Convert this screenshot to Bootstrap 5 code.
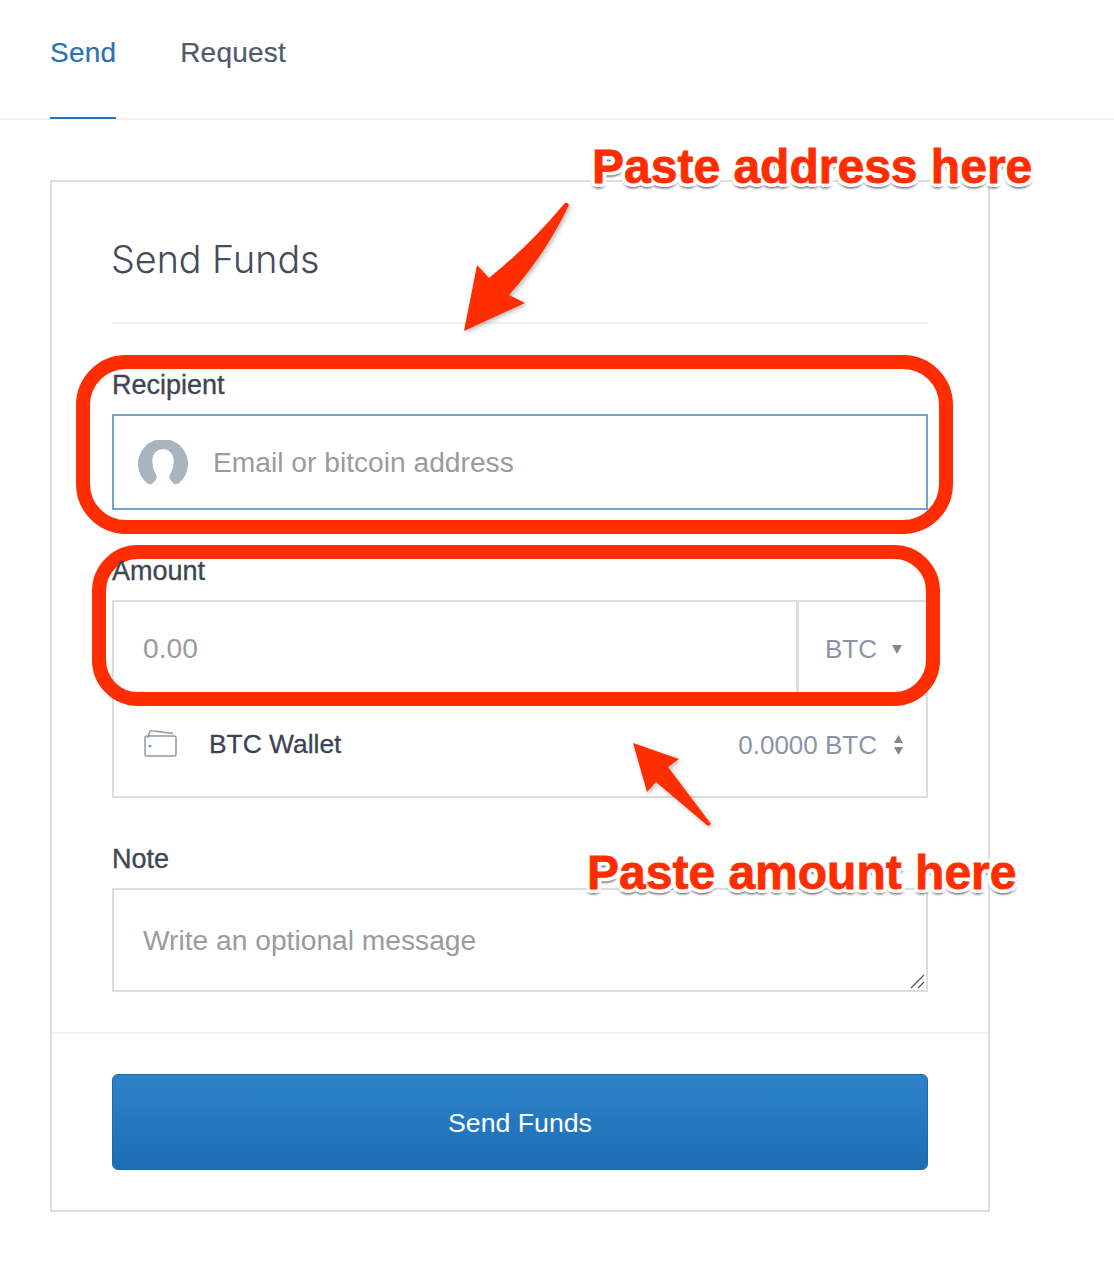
<!DOCTYPE html>
<html lang="en">
<head>
    <meta charset="UTF-8">
    <meta name="viewport" content="width=device-width, initial-scale=1.0">
    <title>Send Funds</title>
    <link href="https://cdn.jsdelivr.net/npm/bootstrap@5.3.0/dist/css/bootstrap.min.css" rel="stylesheet">
    <style>
        body { position: relative; height: 1268px; overflow: hidden; background: #fff; font-family: "Liberation Sans", Arial, sans-serif; color: #3d4653; }

        /* tabs */
        .send-tabs { height: 120px; padding-left: 50px; gap: 64px; border-bottom: 2px solid #eef0f1; }
        .send-tabs .nav-link { height: 119px; padding: 34px 0 0; font-size: 28px; line-height: 38px; letter-spacing: .2px; color: #4f5b6c; border-bottom: 2px solid transparent; -webkit-text-stroke: .2px currentColor; }
        .send-tabs .nav-link.active { color: #2b72b4; border-bottom-color: #2b72b4; }

        /* card */
        .send-page { padding: 60px 0 0 50px; }
        .send-card { width: 940px; height: 1032px; border: 2px solid #dedfe0; border-radius: 0; }
        .send-head { margin: 0 60px; height: 142px; padding-top: 56px; border-bottom: 2px solid #eef0f1; }
        .send-head h1 { margin: 0 0 0 -1px; font-family: Inter, "Liberation Sans", sans-serif; font-weight: 300; font-size: 37.7px; line-height: 42px; color: #434c59; }
        .send-body { padding: 43px 60px 40px; }
        .field-label { display: block; margin: 0 0 11px; font-size: 27px; line-height: 36px; color: #3d4653; -webkit-text-stroke: .35px #3d4653; }
        .amount-label { position: relative; z-index: 5; }
        .field-gap { margin-bottom: 43px; }

        /* inputs */
        .form-control.send-input { height: 96px; padding: 0 29px; border: 2px solid #dcdddf; border-radius: 0; font-size: 28.2px; color: #3d4653; box-shadow: none; }
        .send-input::placeholder { color: #9b9b9b; opacity: 1; }
        .recipient-box { height: 96px; padding-left: 24px; gap: 25px; border: 2px solid #6fa4d2; }
        .recipient-box svg { margin-top: 6px; }
        .form-control.send-input.recipient-input { height: 92px; padding: 0; border: 0; }
        .amount-unit { width: 131px; padding: 2px 0 0 26px; background: #fff; border: 2px solid #dcdddf; border-radius: 0; font-size: 26px; color: #8c93a9; gap: 15px; }
        .amount-unit.input-group-text { margin-left: -2px; }
        .wallet-row { height: 104px; margin-top: -2px; padding: 0 23px 0 30px; border: 2px solid #dcdddf; border-top: 0; font-size: 26px; color: #8c93a9; }
        .wallet-icon { margin-bottom: 4px; }
        .wallet-name { margin-left: 32px; font-size: 26.4px; color: #3a4454; -webkit-text-stroke: .3px #3a4454; }
        .wallet-sort { margin-left: 17px; }
        .note-wrap { position: relative; }
        textarea.form-control.send-input { display: block; height: 104px; padding-top: 33px; resize: none; line-height: 34px; }
        .note-grip { position: absolute; right: 2px; bottom: 2px; }

        /* footer */
        .send-foot { padding: 40px 60px; background: #fff; border-top: 2px solid #eef0f1; border-radius: 0; }
        .btn.send-btn { display: block; width: 100%; height: 96px; padding-top: 8px; font-size: 26.7px; color: #fff; background: linear-gradient(#2e83c8, #1c6db3); border: 1px solid #1f6aa8; border-radius: 6px; }

        /* annotations over the screenshot */
        .mark-box { position: absolute; border: 14px solid #ff2d00; pointer-events: none; }
        .mark-recipient { left: 76px; top: 355px; width: 877px; height: 179px; border-radius: 50px; }
        .mark-amount { left: 92px; top: 545px; width: 848px; height: 161px; border-radius: 46px; }
        .mark-text { position: absolute; margin: 0; font-weight: 700; font-size: 48px; line-height: 56px; white-space: nowrap; color: #ff2d00; -webkit-text-stroke: .8px #ff2d00; text-shadow: 4px 0 0 #fff, -4px 0 0 #fff, 0 4px 0 #fff, 0 -4px 0 #fff, 3px 3px 0 #fff, -3px 3px 0 #fff, 3px -3px 0 #fff, -3px -3px 0 #fff, 3.5px 1.5px 0 #fff, -3.5px 1.5px 0 #fff, 3.5px -1.5px 0 #fff, -3.5px -1.5px 0 #fff, 0 6px 2px rgba(0, 0, 0, .3), 3px 5px 2px rgba(0, 0, 0, .2), -3px 5px 2px rgba(0, 0, 0, .2); }
        .mark-address { left: 592px; top: 139px; }
        .mark-paste { left: 587px; top: 845px; }
        .mark-arrow { position: absolute; left: 0; top: 0; pointer-events: none; filter: drop-shadow(2px 2px 2px rgba(0, 0, 0, .25)); }
    </style>
</head>
<body>
    <!-- Tabs -->
    <nav class="nav send-tabs">
        <a class="nav-link active" href="#">Send</a>
        <a class="nav-link" href="#">Request</a>
    </nav>

    <!-- Send form -->
    <div class="send-page">
        <div class="card send-card">
            <div class="send-head"><h1>Send Funds</h1></div>
            <form class="send-body">
                <div class="field-gap">
                    <label class="field-label" for="recipient">Recipient</label>
                    <div class="d-flex align-items-center recipient-box">
                        <svg width="50" height="50" viewBox="0 0 50 50" class="flex-shrink-0">
                            <path fill="#a9b4bf" d="M9.5 43.5A25 25 0 1 1 40.5 43.5L37 44.5C34.5 42.5 32.5 40.5 31.5 38.5C31 36.5 31.5 35 32.5 33.5C35 29 36 24 35.5 19C35 13 30 9 25 9C20 9 15 13 14.5 19C14 24 15 29 17.5 33.5C18.5 35 19 36.5 18.5 38.5C17.5 40.5 15.5 42.5 13 44.5Z"/>
                        </svg>
                        <input id="recipient" class="form-control send-input recipient-input" placeholder="Email or bitcoin address">
                    </div>
                </div>
                <div class="field-gap">
                    <label class="field-label amount-label" for="amount">Amount</label>
                    <div class="input-group">
                        <input id="amount" class="form-control send-input" placeholder="0.00">
                        <span class="input-group-text amount-unit">BTC
                            <svg width="10" height="10" viewBox="0 0 10 10"><path fill="#85878c" d="M0 1H10L5 10Z"/></svg>
                        </span>
                    </div>
                    <div class="d-flex align-items-center wallet-row">
                        <svg class="wallet-icon" width="33" height="28" viewBox="0 0 33 28" fill="none" stroke="#8c98a8" stroke-width="1.5">
                            <path d="M4 9L5.5 3.5C5.8 2.2 7 1.6 8 1.8L29 4.5"/>
                            <rect x="1" y="7" width="31" height="20" rx="2"/>
                            <circle cx="6" cy="17" r=".8" fill="#8c98a8"/>
                        </svg>
                        <span class="wallet-name">BTC Wallet</span>
                        <span class="ms-auto">0.0000 BTC</span>
                        <svg class="wallet-sort" width="9" height="20" viewBox="0 0 9 20"><path fill="#85878c" d="M4.5 0L9 8H0ZM0 12H9L4.5 20Z"/></svg>
                    </div>
                </div>
                <label class="field-label" for="note">Note</label>
                <div class="note-wrap">
                    <textarea id="note" class="form-control send-input" placeholder="Write an optional message"></textarea>
                    <svg class="note-grip" width="16" height="16" viewBox="0 0 16 16" stroke="#555" stroke-width="1.3">
                        <path d="M1 14L14 1M8 14L14 8"/>
                    </svg>
                </div>
            </form>
            <div class="card-footer send-foot">
                <button type="button" class="btn send-btn">Send Funds</button>
            </div>
        </div>
    </div>

    <!-- Annotations -->
    <div class="mark-box mark-recipient"></div>
    <div class="mark-box mark-amount"></div>
    <svg class="mark-arrow" width="1114" height="1268" viewBox="0 0 1114 1268">
        <path fill="#ff2d00" d="M564 204Q567 201 569 205Q545 255 509 295L525 303L464 331L477 265L489 278Q530 245 564 204Z"/>
        <path fill="#ff2d00" d="M633 743L679 759L668 767L711 824L708 826L656 782L647 792Z"/>
    </svg>
    <p class="mark-text mark-address">Paste address here</p>
    <p class="mark-text mark-paste">Paste amount here</p>

    <script src="https://cdn.jsdelivr.net/npm/bootstrap@5.3.0/dist/js/bootstrap.bundle.min.js"></script>
</body>
</html>
